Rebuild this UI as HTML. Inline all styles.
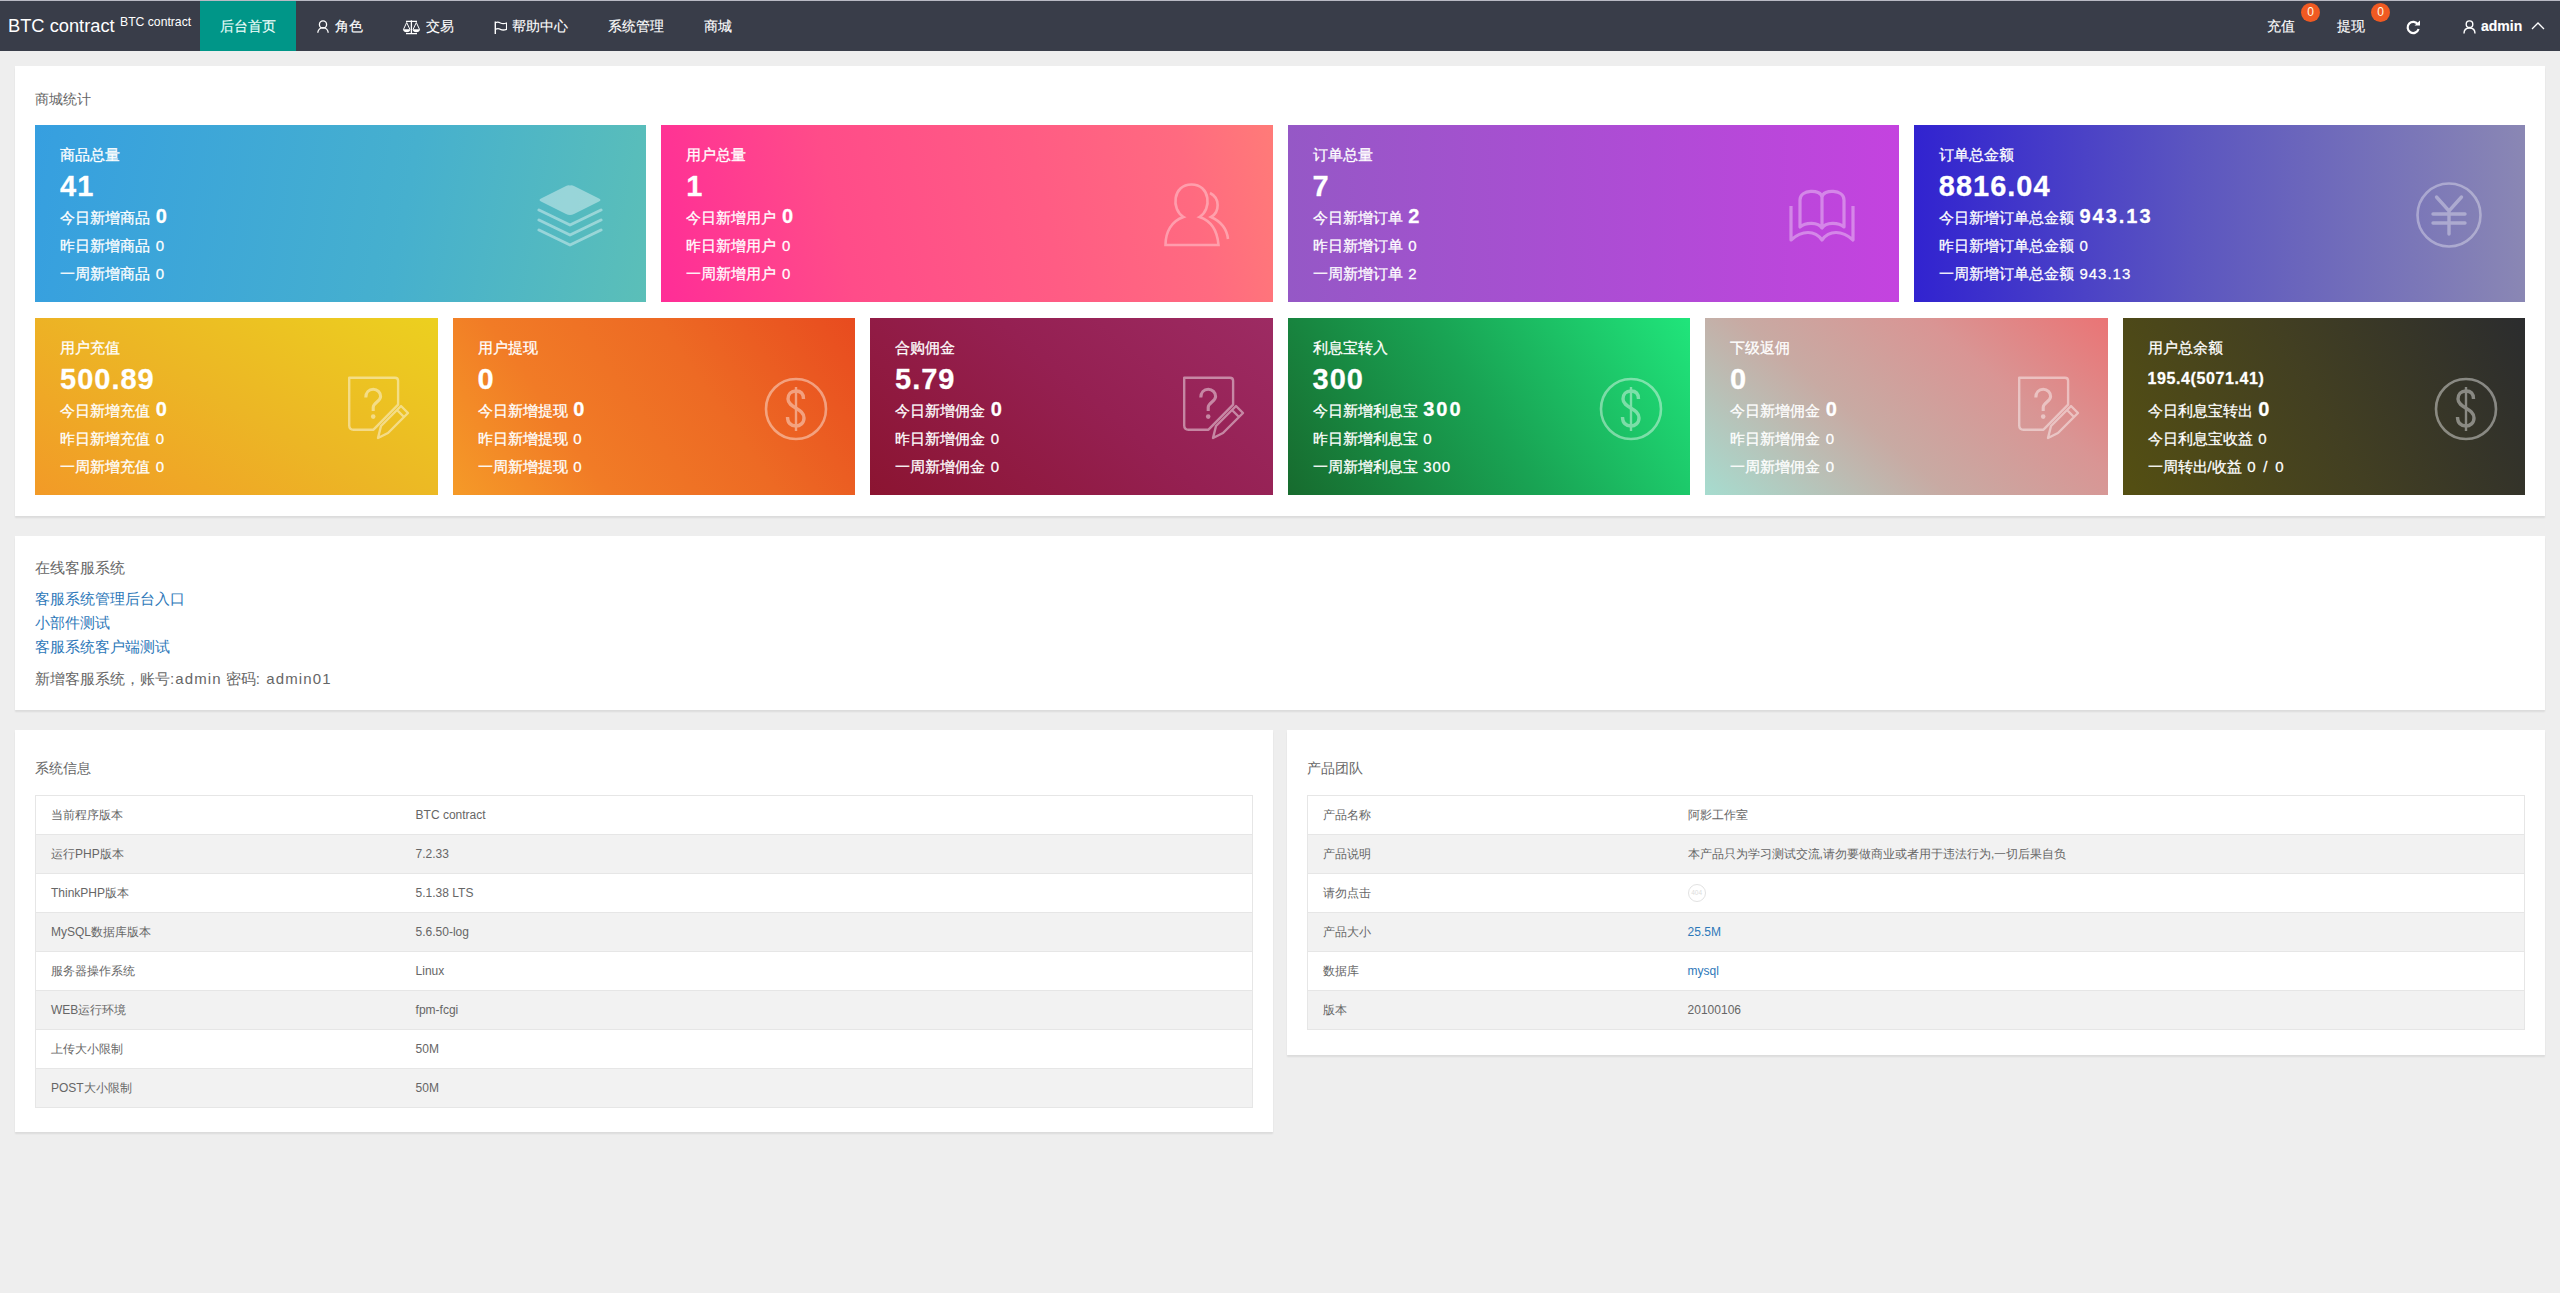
<!DOCTYPE html><html><head><meta charset="utf-8"><style>
*{box-sizing:border-box}
html,body{margin:0;padding:0;width:2560px;height:1293px;overflow:hidden;background:#eeeeee;font-family:"Liberation Sans",sans-serif;color:#666}
.abs{position:absolute}
#hd{position:absolute;left:0;top:0;width:2560px;height:51px;background:#393d49;border-top:1px solid #b9bac4}
#hd .logo{position:absolute;left:8px;top:13px;font-size:18.3px;color:#fff;line-height:24px;white-space:nowrap}
#hd .logo small{position:absolute;left:112px;top:0px;font-size:12.2px;line-height:16px}
.nav{position:absolute;top:0;height:50px;line-height:51px;font-size:14px;color:#fff;white-space:nowrap;-webkit-text-stroke:0.2px rgba(255,255,255,.7)}
.nav.on{background:#009688;color:#e8fffa}
.nav svg{vertical-align:middle;position:relative;top:-2px}
.badge{position:absolute;top:2px;width:19px;height:19px;border-radius:50%;background:#f15a22;color:#fff8e0;font-size:12px;line-height:19px;text-align:center}
.card{position:absolute;background:#fff;box-shadow:0 2px 1.5px rgba(0,0,0,.075)}
.ch{position:absolute;left:20px;font-size:15px;color:#666;line-height:20px;white-space:nowrap}
.sc{position:absolute;height:177px;color:#fff;overflow:hidden;-webkit-text-stroke:0.35px rgba(255,255,255,.8)}
.sc>div{position:absolute;left:25px;white-space:nowrap;word-spacing:1.5px}
.sc .t{top:20px;font-size:15px;line-height:20px}
.sc .num{top:45px;font-size:29px;line-height:32px;font-weight:bold;letter-spacing:1px}
.sc .num.small{top:51px;font-size:16px;line-height:20px;letter-spacing:.6px}
.sc .r1{top:80px;font-size:15px;line-height:22px}
.sc .r1 b{font-size:20px;letter-spacing:2px}
.sc .r2{top:111px;font-size:15px;line-height:20px}
.sc .r3{top:139px;font-size:15px;line-height:20px}
.sc .n{letter-spacing:1px}
.sc .ic{line-height:0}
.lat{letter-spacing:1.1px}
.lnk{position:absolute;left:20px;font-size:15px;line-height:20px;color:#2d78b9;white-space:nowrap}
table{position:absolute;border-collapse:collapse;font-size:12px;color:#666;table-layout:fixed}
td{height:39px;padding:0 15px;border:1px solid #e6e6e6;border-left:none;border-right:none;white-space:nowrap}
tr:nth-child(even) td{background:#f2f2f2}
table{border-left:1px solid #e6e6e6;border-right:1px solid #e6e6e6}
</style></head><body>
<div id="hd">
<div class="logo">BTC contract<small>BTC contract</small></div>
<div class="nav on" style="left:200px;width:96px;padding-left:20px">后台首页</div>
<div class="abs" style="left:316px;top:18px;line-height:0"><svg width="14" height="16" viewBox="0 0 14 16"><circle cx="7" cy="5.4" r="3.6" fill="none" stroke="#fff" stroke-width="1.3"/><path d="M1.8 13.8 A5.2 5.2 0 0 1 12.2 13.8" fill="none" stroke="#fff" stroke-width="1.3"/></svg></div>
<div class="nav" style="left:335px">角色</div>
<div class="abs" style="left:402px;top:18px;line-height:0"><svg width="19" height="16" viewBox="0 0 19 16"><path d="M9.4 1.2 L9.4 15 M4 2.4 L15 2.4 M4 14.7 L15 14.7" stroke="#fff" stroke-width="1.3" fill="none"/><path d="M4.7 3.5 L1.5 10.4 M4.7 3.5 L7.9 10.4 M14.3 3.5 L11.1 10.4 M14.3 3.5 L17.5 10.4" stroke="#fff" stroke-width="1" fill="none"/><path d="M0.9 10.2 L8.5 10.2 Q8 13.2 4.7 13.2 Q1.4 13.2 0.9 10.2Z M10.5 10.2 L18.1 10.2 Q17.6 13.2 14.3 13.2 Q11 13.2 10.5 10.2Z" fill="#fff"/></svg></div>
<div class="nav" style="left:426px">交易</div>
<div class="abs" style="left:493px;top:19px;line-height:0"><svg width="14" height="15" viewBox="0 0 14 15"><path d="M2.3 1.5 L2.3 14" stroke="#fff" stroke-width="1.4" fill="none"/><path d="M2.3 2.6 Q5 1.6 7.5 3 Q10 4.2 13.6 3 L13.6 9.4 Q10 10.6 7.5 9.4 Q5 8 2.3 9.4" fill="none" stroke="#fff" stroke-width="1.3" stroke-linejoin="round"/></svg></div>
<div class="nav" style="left:512px">帮助中心</div>
<div class="nav" style="left:608px">系统管理</div>
<div class="nav" style="left:704px">商城</div>
<div class="nav" style="left:2267px">充值</div><div class="badge" style="left:2301px">0</div>
<div class="nav" style="left:2337px">提现</div><div class="badge" style="left:2371px">0</div>
<div class="abs" style="left:2406px;top:19px;line-height:0"><svg width="15" height="15" viewBox="0 0 15 15"><path d="M12 4.5 A5.6 5.6 0 1 0 12.6 9" fill="none" stroke="#fff" stroke-width="2.2"/><path d="M8.5 5.5 L14 5.5 L14 0.5Z" fill="#fff"/></svg></div>
<div class="abs" style="left:2463px;top:19px;line-height:0"><svg width="13" height="14" viewBox="0 0 13 14"><circle cx="6.5" cy="4.2" r="3.3" fill="none" stroke="#fff" stroke-width="1.4"/><path d="M1 13.5 C1 9.8 3.5 8 6.5 8 C9.5 8 12 9.8 12 13.5" fill="none" stroke="#fff" stroke-width="1.4"/></svg></div>
<div class="nav" style="left:2481px;font-weight:bold">admin</div>
<div class="abs" style="left:2531px;top:20px;line-height:0"><svg width="14" height="9" viewBox="0 0 14 9"><path d="M1 8 L7 2 L13 8" fill="none" stroke="#fff" stroke-width="1.3"/></svg></div>
</div>
<div class="card" style="left:15px;top:66px;width:2530px;height:450px"><div class="ch" style="top:23px;font-size:14px">商城统计</div></div>
<div class="sc" style="left:35.0px;top:125px;width:611.25px;background:linear-gradient(100deg,#369fe0 0%,#46b0ce 60%,#5bbfb8 100%)">
<div class="t">商品总量</div><div class="num">41</div>
<div class="r1">今日新增商品 <b>0</b></div><div class="r2">昨日新增商品 <span class="n">0</span></div><div class="r3">一周新增商品 <span class="n">0</span></div>
<div class="ic" style="left:500.25px;top:58.0px;opacity:0.4"><svg width="70" height="64" viewBox="0 0 70 64"><path d="M35 2.5 Q37 2 39 3 L64 15.5 Q67 17 64 18.5 L39 31 Q35 33 31 31 L6 18.5 Q3 17 6 15.5 L31 3 Q33 2 35 2.5Z" fill="#fff"/><path d="M4 27 L35 42 L66 27 M4 37 L35 52 L66 37 M4 47 L35 62 L66 47" fill="none" stroke="#fff" stroke-width="3" stroke-linecap="round" stroke-linejoin="round"/></svg></div></div>
<div class="sc" style="left:661.25px;top:125px;width:611.25px;background:linear-gradient(78deg,#ff2d97 0%,#ff4c89 30%,#ff5c84 62%,#ff6a80 85%,#ff7b78 100%)">
<div class="t">用户总量</div><div class="num">1</div>
<div class="r1">今日新增用户 <b>0</b></div><div class="r2">昨日新增用户 <span class="n">0</span></div><div class="r3">一周新增用户 <span class="n">0</span></div>
<div class="ic" style="left:500.25px;top:57.0px;opacity:0.35"><svg width="70" height="66" viewBox="0 0 70 66"><path d="M21.5 35 C9 27.5 10.5 2.5 29.5 2.5 C48.5 2.5 50 27.5 37.5 35 C49.5 39 55.5 50 56.5 63 L3.5 63 C3.5 50 9.5 39 21.5 35Z" fill="none" stroke="#fff" stroke-width="2.6" stroke-linejoin="miter"/><path d="M48 11 C58 16 58 30 49 35 C60 40 65 48 66 57" fill="none" stroke="#fff" stroke-width="2.6"/></svg></div></div>
<div class="sc" style="left:1287.5px;top:125px;width:611.25px;background:linear-gradient(90deg,#9558c6 0%,#b04bd6 60%,#c443df 100%)">
<div class="t">订单总量</div><div class="num">7</div>
<div class="r1">今日新增订单 <b>2</b></div><div class="r2">昨日新增订单 <span class="n">0</span></div><div class="r3">一周新增订单 <span class="n">2</span></div>
<div class="ic" style="left:500.25px;top:63.0px;opacity:0.35"><svg width="70" height="56" viewBox="0 0 70 56"><path d="M12 39 L12 12 C12 1 33 1 34 9 C35 1 56 1 56 12 L56 39 C50 34 38 34 34 40 C30 34 18 34 12 39Z M34 9 L34 40" fill="none" stroke="#fff" stroke-width="3.2" stroke-linejoin="round"/><path d="M3 18 L3 52 C14 42 27 42 34 52 C41 42 54 42 65 52 L65 18" fill="none" stroke="#fff" stroke-width="3.2" stroke-linejoin="round"/></svg></div></div>
<div class="sc" style="left:1913.75px;top:125px;width:611.25px;background:linear-gradient(90deg,#3123d0 0%,#5b55c0 45%,#8a87b4 100%)">
<div class="t">订单总金额</div><div class="num">8816.04</div>
<div class="r1">今日新增订单总金额 <b>943.13</b></div><div class="r2">昨日新增订单总金额 <span class="n">0</span></div><div class="r3">一周新增订单总金额 <span class="n">943.13</span></div>
<div class="ic" style="left:500.25px;top:55.0px;opacity:0.35"><svg width="70" height="70" viewBox="0 0 70 70"><circle cx="35" cy="35" r="31.5" fill="none" stroke="#fff" stroke-width="2.6"/><path d="M22.5 17 L35 31 L47.5 17 M35 31 L35 54 M19 34 L51 34 M19 43 L51 43" fill="none" stroke="#fff" stroke-width="3.4" stroke-linecap="round"/></svg></div></div>
<div class="sc" style="left:35.0px;top:318px;width:402.5px;background:linear-gradient(30deg,#f29a27 0%,#ecb625 50%,#ecd01f 100%)">
<div class="t">用户充值</div><div class="num">500.89</div>
<div class="r1">今日新增充值 <b>0</b></div><div class="r2">昨日新增充值 <span class="n">0</span></div><div class="r3">一周新增充值 <span class="n">0</span></div>
<div class="ic" style="left:309.5px;top:56.0px;opacity:0.45"><svg width="66" height="68" viewBox="0 0 66 68"><path d="M4.2 3.7 L50 3.7 Q53.1 3.7 53.1 6.8 L53.1 30.6 L28.5 55.7 L8.5 55.7 Q4.2 55.7 4.2 51.4Z" fill="none" stroke="#fff" stroke-width="2.4" stroke-linejoin="round"/><path d="M20.8 23.5 C20.8 18.5 24 15.3 28.2 15.3 C32.4 15.3 35.6 18.5 35.6 22.6 C35.6 27.5 28.2 28.5 28.2 33.5 L28.2 37" fill="none" stroke="#fff" stroke-width="3.1"/><circle cx="28.2" cy="42.6" r="2.3" fill="#fff"/><path d="M33 64 L36 52 L56 32 L63 39 L43 59Z M52 36 L59 43" fill="none" stroke="#fff" stroke-width="2.4" stroke-linejoin="round"/></svg></div></div>
<div class="sc" style="left:452.5px;top:318px;width:402.5px;background:linear-gradient(55deg,#f59a28 0%,#f17b26 30%,#ed6a24 62%,#e84b1f 100%)">
<div class="t">用户提现</div><div class="num">0</div>
<div class="r1">今日新增提现 <b>0</b></div><div class="r2">昨日新增提现 <span class="n">0</span></div><div class="r3">一周新增提现 <span class="n">0</span></div>
<div class="ic" style="left:310.5px;top:58.0px;opacity:0.42"><svg width="66" height="66" viewBox="0 0 66 66"><circle cx="33" cy="33" r="30" fill="none" stroke="#fff" stroke-width="2.6"/><path d="M40.5 23 C40.5 17 37 15 33 15 C28 15 25 18 25 23 C25 32 41 32 41 42 C41 47 37 50 33 50 C28 50 24.5 47 24.5 41" fill="none" stroke="#fff" stroke-width="3.4"/><path d="M33 11 L33 55" fill="none" stroke="#fff" stroke-width="2.4"/></svg></div></div>
<div class="sc" style="left:870.0px;top:318px;width:402.5px;background:linear-gradient(40deg,#8b1431 0%,#952052 55%,#9d2b63 100%)">
<div class="t">合购佣金</div><div class="num">5.79</div>
<div class="r1">今日新增佣金 <b>0</b></div><div class="r2">昨日新增佣金 <span class="n">0</span></div><div class="r3">一周新增佣金 <span class="n">0</span></div>
<div class="ic" style="left:309.5px;top:56.0px;opacity:0.45"><svg width="66" height="68" viewBox="0 0 66 68"><path d="M4.2 3.7 L50 3.7 Q53.1 3.7 53.1 6.8 L53.1 30.6 L28.5 55.7 L8.5 55.7 Q4.2 55.7 4.2 51.4Z" fill="none" stroke="#fff" stroke-width="2.4" stroke-linejoin="round"/><path d="M20.8 23.5 C20.8 18.5 24 15.3 28.2 15.3 C32.4 15.3 35.6 18.5 35.6 22.6 C35.6 27.5 28.2 28.5 28.2 33.5 L28.2 37" fill="none" stroke="#fff" stroke-width="3.1"/><circle cx="28.2" cy="42.6" r="2.3" fill="#fff"/><path d="M33 64 L36 52 L56 32 L63 39 L43 59Z M52 36 L59 43" fill="none" stroke="#fff" stroke-width="2.4" stroke-linejoin="round"/></svg></div></div>
<div class="sc" style="left:1287.5px;top:318px;width:402.5px;background:linear-gradient(58deg,#176b2e 0%,#19a454 50%,#20e57b 100%)">
<div class="t">利息宝转入</div><div class="num">300</div>
<div class="r1">今日新增利息宝 <b>300</b></div><div class="r2">昨日新增利息宝 <span class="n">0</span></div><div class="r3">一周新增利息宝 <span class="n">300</span></div>
<div class="ic" style="left:310.5px;top:58.0px;opacity:0.42"><svg width="66" height="66" viewBox="0 0 66 66"><circle cx="33" cy="33" r="30" fill="none" stroke="#fff" stroke-width="2.6"/><path d="M40.5 23 C40.5 17 37 15 33 15 C28 15 25 18 25 23 C25 32 41 32 41 42 C41 47 37 50 33 50 C28 50 24.5 47 24.5 41" fill="none" stroke="#fff" stroke-width="3.4"/><path d="M33 11 L33 55" fill="none" stroke="#fff" stroke-width="2.4"/></svg></div></div>
<div class="sc" style="left:1705.0px;top:318px;width:402.5px;background:linear-gradient(40deg,#a6dccf 0%,#c8aaa3 40%,#d99594 70%,#ea7475 100%)">
<div class="t">下级返佣</div><div class="num">0</div>
<div class="r1">今日新增佣金 <b>0</b></div><div class="r2">昨日新增佣金 <span class="n">0</span></div><div class="r3">一周新增佣金 <span class="n">0</span></div>
<div class="ic" style="left:309.5px;top:56.0px;opacity:0.45"><svg width="66" height="68" viewBox="0 0 66 68"><path d="M4.2 3.7 L50 3.7 Q53.1 3.7 53.1 6.8 L53.1 30.6 L28.5 55.7 L8.5 55.7 Q4.2 55.7 4.2 51.4Z" fill="none" stroke="#fff" stroke-width="2.4" stroke-linejoin="round"/><path d="M20.8 23.5 C20.8 18.5 24 15.3 28.2 15.3 C32.4 15.3 35.6 18.5 35.6 22.6 C35.6 27.5 28.2 28.5 28.2 33.5 L28.2 37" fill="none" stroke="#fff" stroke-width="3.1"/><circle cx="28.2" cy="42.6" r="2.3" fill="#fff"/><path d="M33 64 L36 52 L56 32 L63 39 L43 59Z M52 36 L59 43" fill="none" stroke="#fff" stroke-width="2.4" stroke-linejoin="round"/></svg></div></div>
<div class="sc" style="left:2122.5px;top:318px;width:402.5px;background:linear-gradient(62deg,#544f12 0%,#423f22 50%,#2b2c2e 100%)">
<div class="t">用户总余额</div><div class="num small">195.4(5071.41)</div>
<div class="r1">今日利息宝转出 <b>0</b></div><div class="r2">今日利息宝收益 <span class="n">0</span></div><div class="r3">一周转出/收益 <span class="n">0 / 0</span></div>
<div class="ic" style="left:310.5px;top:58.0px;opacity:0.42"><svg width="66" height="66" viewBox="0 0 66 66"><circle cx="33" cy="33" r="30" fill="none" stroke="#fff" stroke-width="2.6"/><path d="M40.5 23 C40.5 17 37 15 33 15 C28 15 25 18 25 23 C25 32 41 32 41 42 C41 47 37 50 33 50 C28 50 24.5 47 24.5 41" fill="none" stroke="#fff" stroke-width="3.4"/><path d="M33 11 L33 55" fill="none" stroke="#fff" stroke-width="2.4"/></svg></div></div>
<div class="card" style="left:15px;top:536px;width:2530px;height:174px">
<div class="ch" style="top:22px">在线客服系统</div>
<div class="lnk" style="top:53px">客服系统管理后台入口</div>
<div class="lnk" style="top:77px">小部件测试</div>
<div class="lnk" style="top:101px">客服系统客户端测试</div>
<div class="ch" style="top:133px;color:#666">新增客服系统，账号<span class="lat">:admin</span> 密码<span class="lat">: admin01</span></div>
</div>
<div class="card" style="left:15px;top:730px;width:1258px;height:402px"><div class="ch" style="top:28px;font-size:14px">系统信息</div><table style="left:20px;top:65px;width:1218px"><colgroup><col style="width:30%"><col></colgroup><tr><td>当前程序版本</td><td>BTC contract</td></tr><tr><td>运行PHP版本</td><td>7.2.33</td></tr><tr><td>ThinkPHP版本</td><td>5.1.38 LTS</td></tr><tr><td>MySQL数据库版本</td><td>5.6.50-log</td></tr><tr><td>服务器操作系统</td><td>Linux</td></tr><tr><td>WEB运行环境</td><td>fpm-fcgi</td></tr><tr><td>上传大小限制</td><td>50M</td></tr><tr><td>POST大小限制</td><td>50M</td></tr></table></div>
<div class="card" style="left:1287px;top:730px;width:1258px;height:325px"><div class="ch" style="top:28px;font-size:14px">产品团队</div><table style="left:20px;top:65px;width:1218px"><colgroup><col style="width:30%"><col></colgroup><tr><td>产品名称</td><td>阿影工作室</td></tr><tr><td>产品说明</td><td>本产品只为学习测试交流,请勿要做商业或者用于违法行为,一切后果自负</td></tr><tr><td>请勿点击</td><td><span style="display:inline-block;width:18px;height:18px;border:1px solid #e2e2e2;border-radius:50%;font-size:6.5px;line-height:16px;text-align:center;color:#ddd;vertical-align:middle">404</span></td></tr><tr><td>产品大小</td><td><span style="color:#2d78b9">25.5M</span></td></tr><tr><td>数据库</td><td><span style="color:#2d78b9">mysql</span></td></tr><tr><td>版本</td><td>20100106</td></tr></table></div>
</body></html>
